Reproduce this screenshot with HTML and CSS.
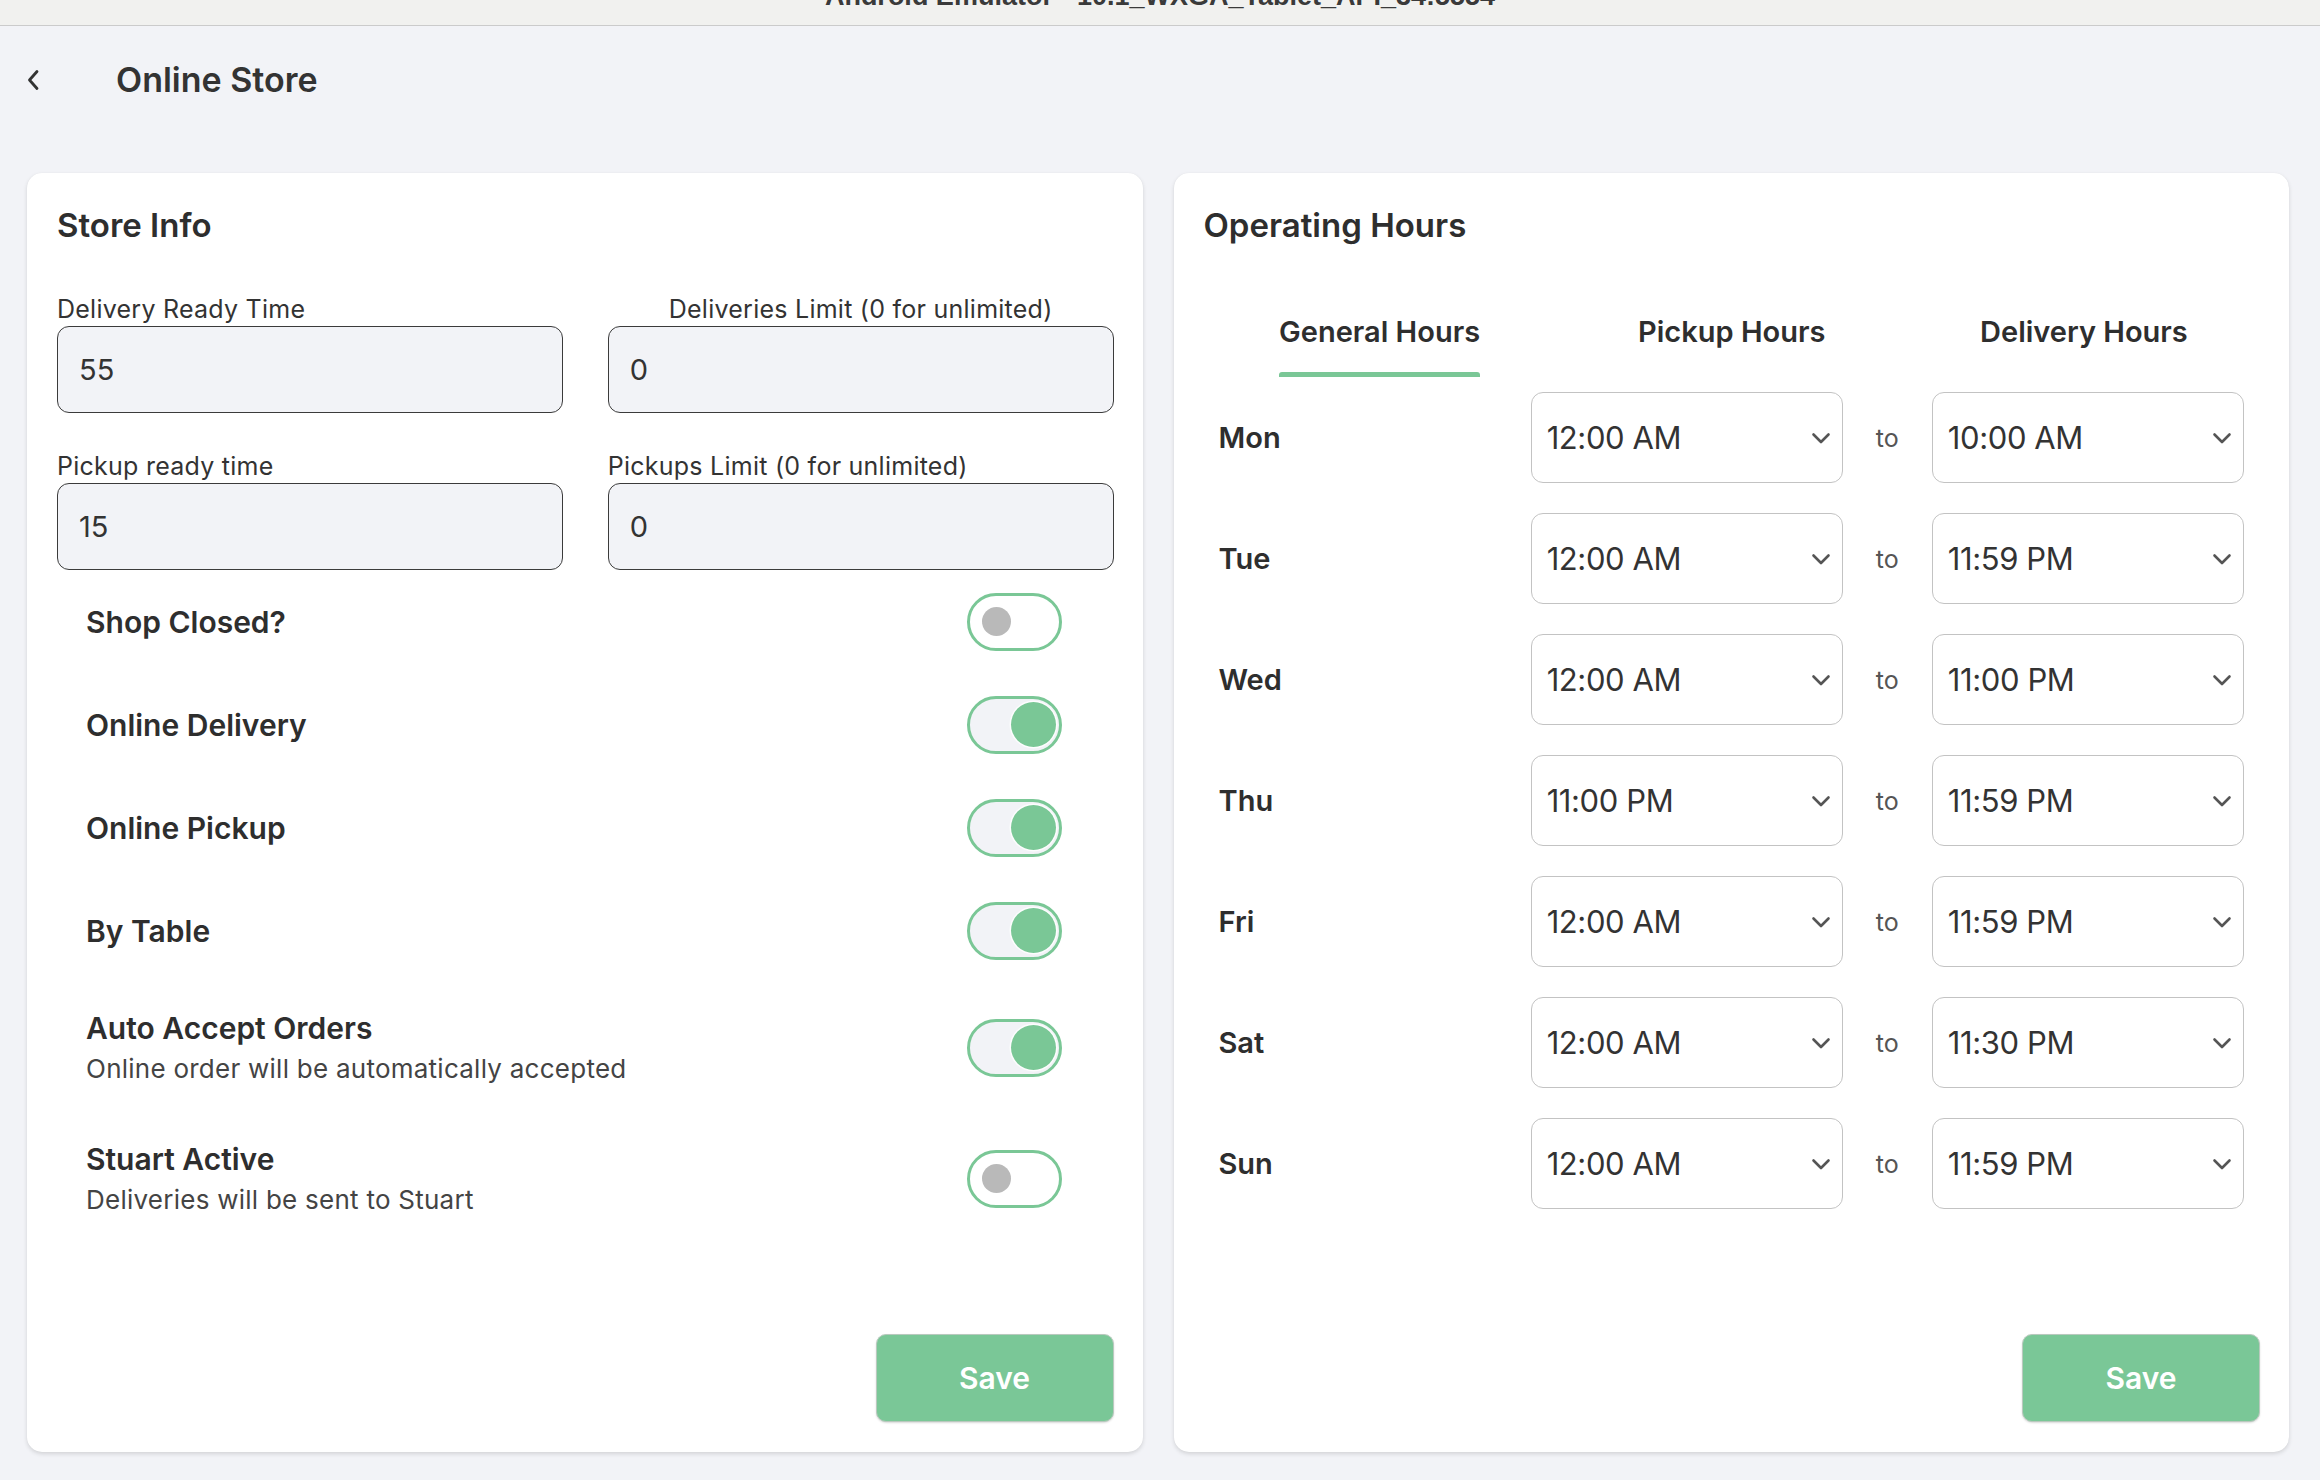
FILE: index.html
```html
<!DOCTYPE html>
<html lang="en">
<head>
<meta charset="utf-8">
<title>Online Store</title>
<link rel="stylesheet" href="styles.css">
</head>
<body>
<div class="titlebar"><div class="titlebar-text">Android Emulator - 10.1_WXGA_Tablet_API_34:5554</div></div>
<header class="header">
  <svg class="back" viewBox="0 0 14 22" width="14" height="22"><path d="M11 2.5 L3.5 11 L11 19.5" fill="none" stroke="#333" stroke-width="2.8" stroke-linecap="round" stroke-linejoin="round"/></svg>
  <h1 class="page-title">Online Store</h1>
</header>
<main class="main">
  <section class="card">
    <h2 class="card-title">Store Info</h2>
    <div class="fields">
      <div class="field"><div class="field-label">Delivery Ready Time</div><div class="input">55</div></div>
      <div class="field field-center"><div class="field-label">Deliveries Limit (0 for unlimited)</div><div class="input">0</div></div>
      <div class="field"><div class="field-label">Pickup ready time</div><div class="input">15</div></div>
      <div class="field"><div class="field-label">Pickups Limit (0 for unlimited)</div><div class="input">0</div></div>
    </div>
    <div class="toggles">
      <div class="toggle-row"><div class="toggle-text"><div class="toggle-title">Shop Closed?</div></div><div class="switch"><span class="knob"></span></div></div>
      <div class="toggle-row"><div class="toggle-text"><div class="toggle-title">Online Delivery</div></div><div class="switch on"><span class="knob"></span></div></div>
      <div class="toggle-row"><div class="toggle-text"><div class="toggle-title">Online Pickup</div></div><div class="switch on"><span class="knob"></span></div></div>
      <div class="toggle-row"><div class="toggle-text"><div class="toggle-title">By Table</div></div><div class="switch on"><span class="knob"></span></div></div>
      <div class="toggle-row tall"><div class="toggle-text"><div class="toggle-title">Auto Accept Orders</div><div class="toggle-sub">Online order will be automatically accepted</div></div><div class="switch on"><span class="knob"></span></div></div>
      <div class="toggle-row tall"><div class="toggle-text"><div class="toggle-title">Stuart Active</div><div class="toggle-sub">Deliveries will be sent to Stuart</div></div><div class="switch"><span class="knob"></span></div></div>
    </div>
    <div class="actions"><button class="save">Save</button></div>
  </section>

  <section class="card">
    <h2 class="card-title">Operating Hours</h2>
    <div class="tabs">
      <div class="tab"><div class="tab-active"><span class="tab-label">General Hours</span><span class="tab-bar"></span></div></div>
      <div class="tab"><span class="tab-label">Pickup Hours</span></div>
      <div class="tab"><span class="tab-label">Delivery Hours</span></div>
    </div>
    <div class="hours">
      <div class="hours-row"><div class="day">Mon</div><div class="select"><span>12:00 AM</span><svg class="chev" viewBox="0 0 20 12" width="20" height="12"><path d="M2.5 2.5l7.5 7.5 7.5-7.5" fill="none" stroke="#555" stroke-width="2.6" stroke-linecap="round" stroke-linejoin="round"/></svg></div><div class="to">to</div><div class="select"><span>10:00 AM</span><svg class="chev" viewBox="0 0 20 12" width="20" height="12"><path d="M2.5 2.5l7.5 7.5 7.5-7.5" fill="none" stroke="#555" stroke-width="2.6" stroke-linecap="round" stroke-linejoin="round"/></svg></div></div>
      <div class="hours-row"><div class="day">Tue</div><div class="select"><span>12:00 AM</span><svg class="chev" viewBox="0 0 20 12" width="20" height="12"><path d="M2.5 2.5l7.5 7.5 7.5-7.5" fill="none" stroke="#555" stroke-width="2.6" stroke-linecap="round" stroke-linejoin="round"/></svg></div><div class="to">to</div><div class="select"><span>11:59 PM</span><svg class="chev" viewBox="0 0 20 12" width="20" height="12"><path d="M2.5 2.5l7.5 7.5 7.5-7.5" fill="none" stroke="#555" stroke-width="2.6" stroke-linecap="round" stroke-linejoin="round"/></svg></div></div>
      <div class="hours-row"><div class="day">Wed</div><div class="select"><span>12:00 AM</span><svg class="chev" viewBox="0 0 20 12" width="20" height="12"><path d="M2.5 2.5l7.5 7.5 7.5-7.5" fill="none" stroke="#555" stroke-width="2.6" stroke-linecap="round" stroke-linejoin="round"/></svg></div><div class="to">to</div><div class="select"><span>11:00 PM</span><svg class="chev" viewBox="0 0 20 12" width="20" height="12"><path d="M2.5 2.5l7.5 7.5 7.5-7.5" fill="none" stroke="#555" stroke-width="2.6" stroke-linecap="round" stroke-linejoin="round"/></svg></div></div>
      <div class="hours-row"><div class="day">Thu</div><div class="select"><span>11:00 PM</span><svg class="chev" viewBox="0 0 20 12" width="20" height="12"><path d="M2.5 2.5l7.5 7.5 7.5-7.5" fill="none" stroke="#555" stroke-width="2.6" stroke-linecap="round" stroke-linejoin="round"/></svg></div><div class="to">to</div><div class="select"><span>11:59 PM</span><svg class="chev" viewBox="0 0 20 12" width="20" height="12"><path d="M2.5 2.5l7.5 7.5 7.5-7.5" fill="none" stroke="#555" stroke-width="2.6" stroke-linecap="round" stroke-linejoin="round"/></svg></div></div>
      <div class="hours-row"><div class="day">Fri</div><div class="select"><span>12:00 AM</span><svg class="chev" viewBox="0 0 20 12" width="20" height="12"><path d="M2.5 2.5l7.5 7.5 7.5-7.5" fill="none" stroke="#555" stroke-width="2.6" stroke-linecap="round" stroke-linejoin="round"/></svg></div><div class="to">to</div><div class="select"><span>11:59 PM</span><svg class="chev" viewBox="0 0 20 12" width="20" height="12"><path d="M2.5 2.5l7.5 7.5 7.5-7.5" fill="none" stroke="#555" stroke-width="2.6" stroke-linecap="round" stroke-linejoin="round"/></svg></div></div>
      <div class="hours-row"><div class="day">Sat</div><div class="select"><span>12:00 AM</span><svg class="chev" viewBox="0 0 20 12" width="20" height="12"><path d="M2.5 2.5l7.5 7.5 7.5-7.5" fill="none" stroke="#555" stroke-width="2.6" stroke-linecap="round" stroke-linejoin="round"/></svg></div><div class="to">to</div><div class="select"><span>11:30 PM</span><svg class="chev" viewBox="0 0 20 12" width="20" height="12"><path d="M2.5 2.5l7.5 7.5 7.5-7.5" fill="none" stroke="#555" stroke-width="2.6" stroke-linecap="round" stroke-linejoin="round"/></svg></div></div>
      <div class="hours-row"><div class="day">Sun</div><div class="select"><span>12:00 AM</span><svg class="chev" viewBox="0 0 20 12" width="20" height="12"><path d="M2.5 2.5l7.5 7.5 7.5-7.5" fill="none" stroke="#555" stroke-width="2.6" stroke-linecap="round" stroke-linejoin="round"/></svg></div><div class="to">to</div><div class="select"><span>11:59 PM</span><svg class="chev" viewBox="0 0 20 12" width="20" height="12"><path d="M2.5 2.5l7.5 7.5 7.5-7.5" fill="none" stroke="#555" stroke-width="2.6" stroke-linecap="round" stroke-linejoin="round"/></svg></div></div>
    </div>
    <div class="actions"><button class="save">Save</button></div>
  </section>
</main>
</body>
</html>
```

FILE: styles.css
```css
html, body {
  margin: 0;
  padding: 0;
  overflow: hidden;
}
body {
  background: #f2f3f7;
  font-family: Inter, "Noto Sans", sans-serif;
  color: #2e2e2e;
  width: 2320px;
  height: 1480px;
}
.titlebar {
  height: 25px;
  border-bottom: 1px solid #cbcbcb;
  background: #f1f1ef;
  overflow: hidden;
  display: flex;
  justify-content: center;
}
.titlebar-text {
  font: 700 27px/30px "Liberation Sans", sans-serif;
  color: #3a3a3a;
  margin-top: -19px;
  white-space: nowrap;
}
.header {
  height: 107px;
  display: flex;
  align-items: center;
  padding-left: 26px;
}
.back {
  display: block;
  margin-right: 76px;
}
.page-title {
  margin: 0;
  font-weight: 600;
  font-size: 34px;
  line-height: 40px;
  color: #333;
}
.main {
  display: flex;
  gap: 31px;
  padding: 40px 31px 0 27px;
}
.card {
  flex: 1;
  height: 1279px;
  box-sizing: border-box;
  background: #fff;
  border-radius: 15px;
  box-shadow: 0 2px 4px rgba(0, 0, 0, 0.13), 0 0 1px rgba(0, 0, 0, 0.06);
  padding: 32px 29px 30px 30px;
  display: flex;
  flex-direction: column;
}
.card-title {
  margin: 0;
  font-weight: 600;
  font-size: 33px;
  line-height: 40px;
  color: #2e2e2e;
}
.fields {
  display: grid;
  grid-template-columns: 1fr 1fr;
  column-gap: 45px;
  row-gap: 38px;
  margin-top: 49px;
}
.field {
  display: flex;
  flex-direction: column;
  gap: 2px;
}
.field-label {
  font-size: 25px;
  line-height: 30px;
  letter-spacing: 0.25px;
  color: #333;
}
.field-center .field-label {
  text-align: center;
}
.input {
  height: 87px;
  box-sizing: border-box;
  border: 1.5px solid #3b3b3b;
  border-radius: 12px;
  background: #f2f3f7;
  display: flex;
  align-items: center;
  padding-left: 21px;
  font-size: 29px;
  color: #333;
}
.toggle-row {
  display: flex;
  align-items: center;
  justify-content: space-between;
  height: 103px;
  padding: 0 52px 0 29px;
}
.toggle-row.tall {
  height: 131px;
}
.toggle-title {
  font-weight: 600;
  font-size: 30px;
  line-height: 36px;
  color: #2e2e2e;
}
.toggle-sub {
  font-size: 26px;
  line-height: 34px;
  letter-spacing: 0.25px;
  margin-top: 6px;
  color: #444;
}
.switch {
  width: 95px;
  height: 58px;
  box-sizing: border-box;
  border: 3px solid #7ac796;
  border-radius: 29px;
  display: flex;
  align-items: center;
  background: #fff;
  padding-left: 12px;
  flex-shrink: 0;
}
.switch.on {
  background: #f2f3f7;
  justify-content: flex-end;
  padding: 0 3px;
}
.knob {
  display: block;
  width: 29px;
  height: 29px;
  border-radius: 50%;
  background: #b9b9b9;
}
.switch.on .knob {
  width: 45px;
  height: 45px;
  background: #7ac796;
  box-shadow: 0 0 0 1.5px rgba(255, 255, 255, 0.8);
}
.actions {
  margin-top: auto;
  display: flex;
  justify-content: flex-end;
}
.save {
  width: 238px;
  height: 88px;
  border-radius: 10px;
  background: #7ac797;
  border: 1px solid #b9c9be;
  color: #fff;
  font-family: Inter, "Noto Sans", sans-serif;
  font-weight: 600;
  font-size: 30px;
  box-shadow: 0 1px 2px rgba(0, 0, 0, 0.15);
}
.tabs {
  display: grid;
  grid-template-columns: repeat(3, 1fr);
  margin-top: 69px;
  justify-items: center;
  align-items: start;
}
.tab-active {
  display: inline-flex;
  flex-direction: column;
  gap: 22px;
}
.tab-label {
  font-weight: 600;
  font-size: 29px;
  line-height: 36px;
  color: #2e2e2e;
}
.tab-bar {
  display: block;
  height: 5px;
  border-radius: 3px 3px 0 0;
  background: #7ac796;
}
.hours {
  display: flex;
  flex-direction: column;
  gap: 30px;
  margin-top: 15px;
  padding: 0 16px 0 15px;
}
.hours-row {
  display: grid;
  grid-template-columns: 1fr 1fr 89px 1fr;
  align-items: center;
}
.day {
  font-weight: 600;
  font-size: 29px;
  line-height: 36px;
  color: #2e2e2e;
}
.select {
  height: 91px;
  box-sizing: border-box;
  border: 1.5px solid #c3c3c3;
  border-radius: 12px;
  display: flex;
  align-items: center;
  justify-content: space-between;
  padding: 0 11px 0 15px;
  font-size: 31px;
  letter-spacing: -0.4px;
  color: #333;
  background: #fff;
}
.chev {
  display: block;
}
.to {
  text-align: center;
  font-size: 25px;
  color: #555;
}
```
